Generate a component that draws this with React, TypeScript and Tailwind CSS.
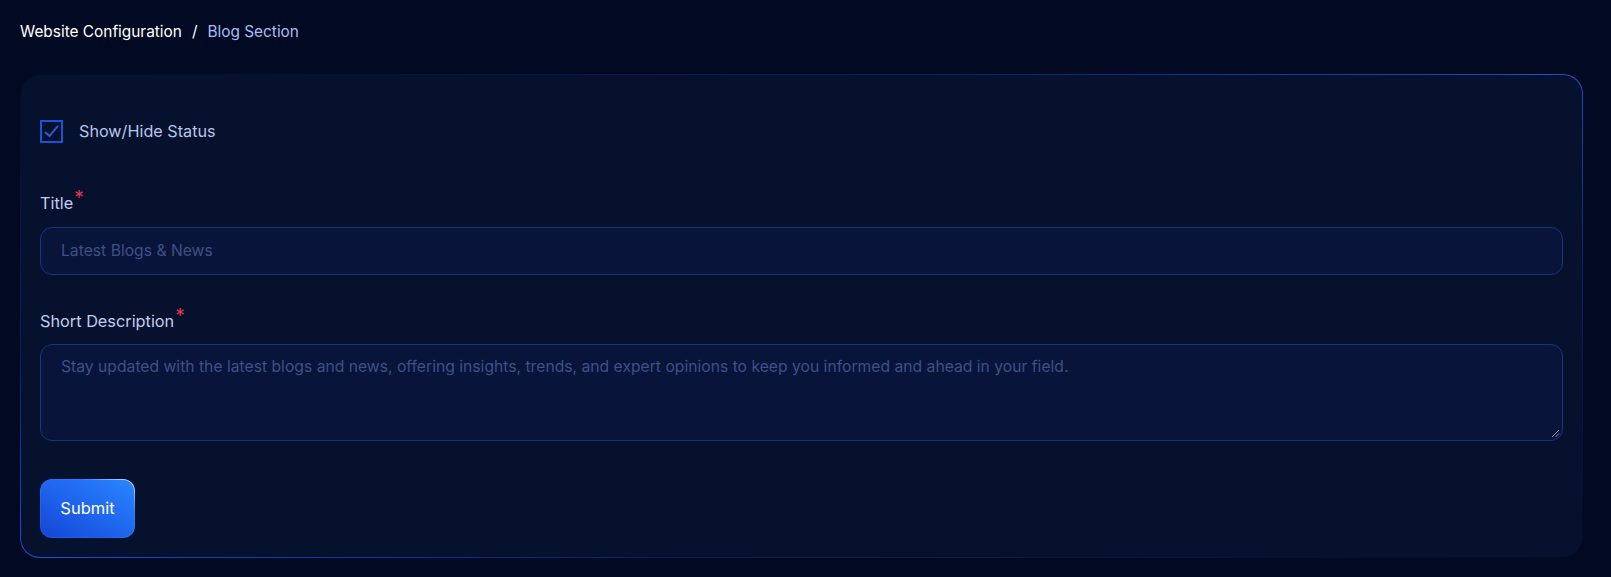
import React from "react";

export default function App() {
  return (
    <div
      className="min-h-[577px] w-full bg-[#020a23] text-[16px]"
      style={{ fontFamily: "Inter, 'Noto Sans', sans-serif" }}
    >
      <div className="pl-5 pr-[28px] pt-5 pb-[19px]">
        <div className="flex items-center leading-6 h-6 text-[15.4px]">
          <span className="text-white">Website Configuration</span>
          <span className="text-white mx-[10px]">/</span>
          <span className="text-[#a9bcf3]">Blog Section</span>
        </div>

        <div className="mt-[30px] rounded-[20px] p-px bg-[linear-gradient(to_bottom_right,rgba(29,78,216,0)_0%,rgba(29,78,216,0.35)_30%,#1d4ed8_50%,rgba(29,78,216,0.35)_70%,rgba(29,78,216,0)_100%)]">
          <div className="rounded-[19px] bg-[#06112d] px-[19px] pt-[44px] pb-[19px]">
            <label className="flex items-center h-6 cursor-pointer">
              <span className="w-[23px] h-[23px] border-2 border-[#1a55d9] flex items-center justify-center">
                <svg width="17" height="15" viewBox="0 0 17 15" fill="none">
                  <path d="M2.5 8.5 L6.5 12 L14.5 2.5" stroke="#2563eb" strokeWidth="1.9" strokeLinecap="round" strokeLinejoin="round" />
                </svg>
              </span>
              <span className="ml-[16px] text-[#b7c5ee] text-[16.2px]">Show/Hide Status</span>
            </label>

            <div className="mt-[48px]">
              <div className="leading-6 text-[#c3cdf0] text-[16.3px]">
                Title<span className="text-[#e5344a] text-[19px] relative -top-[5px] ml-px">*</span>
              </div>
              <div className="mt-[12px] h-[48px] rounded-[12px] border border-[#1c3479] bg-[#09143a] flex items-center px-5 text-[15.7px] text-[#3d5186]">
                Latest Blogs &amp; News
              </div>
            </div>

            <div className="mt-[34px]">
              <div className="leading-6 text-[#c3cdf0] text-[16.3px]">
                Short Description<span className="text-[#e5344a] text-[19px] relative -top-[5px] ml-px">*</span>
              </div>
              <div className="relative mt-[11px] h-[97px] rounded-[12px] border border-[#1c3479] bg-[#09143a] px-5 pt-[10px] text-[15.7px] leading-6 text-[#3d5186]">
                Stay updated with the latest blogs and news, offering insights, trends, and expert opinions to keep you informed and ahead in your field.
                <svg className="absolute right-[2px] bottom-[2px]" width="9" height="9" viewBox="0 0 9 9">
                  <path d="M8 1 L1 8 M8 4.5 L4.5 8" stroke="#8c94a8" strokeWidth="1" />
                </svg>
              </div>
            </div>

            <div className="mt-[38px] inline-block rounded-[12px] p-px bg-[linear-gradient(to_bottom_left,#d6e4ff_0%,#2a7fff_28%,#1a56db_100%)]">
              <button className="w-[93px] h-[57px] rounded-[11px] bg-[linear-gradient(to_top_right,#1446d4_0%,#1f66ee_50%,#2a85ff_100%)] text-white text-[16.5px]">
                Submit
              </button>
            </div>
          </div>
        </div>
      </div>
    </div>
  );
}
